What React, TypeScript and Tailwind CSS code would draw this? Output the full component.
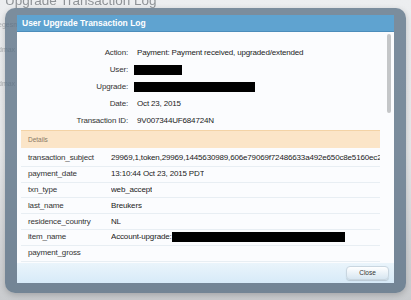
import React from 'react';

const font = { fontFamily: '"Liberation Sans", Arial, sans-serif' };

const summary = [
  { label: 'Action:', value: 'Payment: Payment received, upgraded/extended' },
  { label: 'User:', box: 'w-[48px]' },
  { label: 'Upgrade:', box: 'w-[121px]' },
  { label: 'Date:', value: 'Oct 23, 2015' },
  { label: 'Transaction ID:', value: '9V007344UF684724N' },
];

const details: { key: string; value?: string; redact?: boolean }[] = [
  { key: 'transaction_subject', value: '29969,1,token,29969,1445630989,606e79069f72486633a492e650c8e5160ec285c' },
  { key: 'payment_date', value: '13:10:44 Oct 23, 2015 PDT' },
  { key: 'txn_type', value: 'web_accept' },
  { key: 'last_name', value: 'Breukers' },
  { key: 'residence_country', value: 'NL' },
  { key: 'item_name', value: 'Account-upgrade:', redact: true },
  { key: 'payment_gross' },
];

export default function App() {
  return (
    <div className="relative w-[411px] h-[300px] overflow-hidden bg-gradient-to-b from-[#eceef0] via-[#e6e8ea] to-[#c9cbce]" style={font}>
      {/* page behind the overlay */}
      <div className="blur-[0.6px] text-[#8f9397]">
        <div className="text-[13.5px] leading-[14px] -mt-[6px] pl-[5px] whitespace-nowrap">Upgrade Transaction Log</div>
        <div className="flex flex-col gap-[17px] pt-[13px] text-[7px] leading-[8px] text-[#a9acaf]">
          <span className="-ml-[2px]">egesm</span>
          <span className="-ml-[2px]">dmax</span>
          <span className="-ml-[2px] pt-[9px]">dmax</span>
        </div>
      </div>

      {/* dialog */}
      <div className="absolute left-[5px] top-[8px] w-[401px] h-[285px] rounded-[10px] bg-[rgba(86,108,129,0.75)] pt-[7px] px-[12px] pb-[10px] shadow-[0_2px_6px_rgba(0,0,0,0.2)]">
        <div className="flex flex-col h-full">
          <div className="h-[17px] shrink-0 bg-[#5fa3d0] border-b border-[#4c8dbb] flex items-center px-[5px] text-white font-bold text-[8.5px]">
            User Upgrade Transaction Log
          </div>

          <div className="flex-1 min-h-0 bg-[#fbfcfe] flex">
            <div className="flex-1 min-w-0 overflow-hidden pl-[4px] pr-[1px]">
              <div className="flex flex-col pt-[12px] text-[8px] tracking-[-0.16px] text-[#222]">
                {summary.map((r) => (
                  <div key={r.label} className="h-[17.2px] flex items-center">
                    <span className="w-[116px] text-right pr-[9px] text-[#333]">{r.label}</span>
                    {r.value ? (
                      <span className="whitespace-nowrap">{r.value}</span>
                    ) : (
                      <span className={`h-[10px] -ml-[3px] bg-black ${r.box}`} />
                    )}
                  </div>
                ))}
              </div>

              <div className="h-[18px] bg-[#fbe5c8] border-t border-[#f3d3a6] flex items-center pl-[7px] text-[6.5px] text-[#8a7a66]">
                Details
              </div>
              <div className="pt-[3px] text-[8px] tracking-[-0.16px] text-[#222]">
                {details.map((d) => (
                  <div key={d.key} className="h-[15.8px] flex items-center border-b border-[#e8eef3] whitespace-nowrap">
                    <span className="w-[90px] shrink-0 pl-[7px] text-[#333]">{d.key}</span>
                    <span className="flex items-center overflow-hidden">
                      {d.value}
                      {d.redact && <span className="h-[10px] w-[173px] shrink-0 bg-black" />}
                    </span>
                  </div>
                ))}
              </div>
            </div>
            <div className="w-[13px] shrink-0 pt-[2px] flex justify-center">
              <div className="w-[4px] h-[79px] rounded-full bg-[#c4c6c8] ml-[2px]" />
            </div>
          </div>

          <div className="h-[20px] shrink-0 bg-gradient-to-b from-[#eaf4fb] to-[#d7eaf8] flex items-center justify-end pr-[5px]">
            <button className="w-[43px] h-[14px] rounded-[4px] border border-[#c9d6e0] bg-gradient-to-b from-white to-[#d7e6f1] shadow-[0_1px_1px_rgba(0,0,0,0.15)] text-[6.5px] text-[#333]">
              Close
            </button>
          </div>
        </div>
      </div>
    </div>
  );
}
